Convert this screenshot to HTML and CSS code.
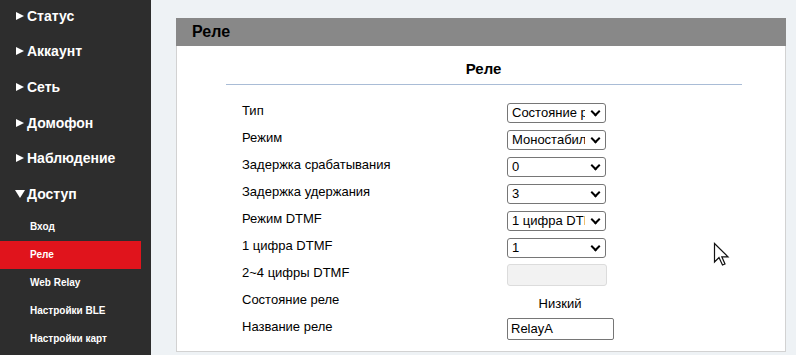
FILE: index.html
```html
<!DOCTYPE html>
<html>
  <head>
    <meta charset="utf-8">
    <title>Реле</title>
    <link rel="stylesheet" href="styles.css">
  </head>
  <body>
    <div class="sidebar">
      <div class="menu">
        <div class="menu-item"><span class="arrow"></span>Статус</div>
        <div class="menu-item"><span class="arrow"></span>Аккаунт</div>
        <div class="menu-item"><span class="arrow"></span>Сеть</div>
        <div class="menu-item"><span class="arrow"></span>Домофон</div>
        <div class="menu-item"><span class="arrow"></span>Наблюдение</div>
        <div class="menu-item"><span class="arrow open"></span>Доступ</div>
      </div>
      <div class="submenu">
        <div class="sub-item">Вход</div>
        <div class="sub-item active">Реле</div>
        <div class="sub-item">Web Relay</div>
        <div class="sub-item">Настройки BLE</div>
        <div class="sub-item">Настройки карт</div>
      </div>
    </div>

    <div class="main">
      <div class="panel">
        <div class="panel-head">Реле</div>
        <div class="panel-body">
          <div class="section-title">Реле</div>
          <div class="form">
            <div class="row">
              <div class="label">Тип</div>
              <div class="field"><span class="select-wrap"><select class="sel"><option>Состояние реле</option></select></span></div>
            </div>
            <div class="row">
              <div class="label">Режим</div>
              <div class="field"><span class="select-wrap"><select class="sel"><option>Моностабильный</option></select></span></div>
            </div>
            <div class="row">
              <div class="label">Задержка срабатывания</div>
              <div class="field"><span class="select-wrap"><select class="sel"><option>0</option></select></span></div>
            </div>
            <div class="row">
              <div class="label">Задержка удержания</div>
              <div class="field"><span class="select-wrap"><select class="sel"><option>3</option></select></span></div>
            </div>
            <div class="row">
              <div class="label">Режим DTMF</div>
              <div class="field"><span class="select-wrap"><select class="sel"><option>1 цифра DTMF</option></select></span></div>
            </div>
            <div class="row">
              <div class="label">1 цифра DTMF</div>
              <div class="field"><span class="select-wrap"><select class="sel"><option>1</option></select></span></div>
            </div>
            <div class="row">
              <div class="label">2~4 цифры DTMF</div>
              <div class="field"><input class="txt disabled" type="text" disabled></div>
            </div>
            <div class="row">
              <div class="label">Состояние реле</div>
              <div class="field"><span class="state">Низкий</span></div>
            </div>
            <div class="row">
              <div class="label">Название реле</div>
              <div class="field"><input class="txt name" type="text" value="RelayA"></div>
            </div>
          </div>
        </div>
      </div>
    </div>

    <svg class="cursor" width="18" height="26" viewBox="0 0 18 26">
      <path d="M1.5 1.5 L1.5 20 L6 15.5 L9.5 23 L12 22 L8.8 14.8 L15 14.8 Z" fill="#fff" stroke="#111" stroke-width="1.2" stroke-linejoin="miter"/>
    </svg>
  </body>
</html>
```

FILE: styles.css
```css
body {
  margin: 0;
  display: flex;
  height: 355px;
  overflow: hidden;
  background: #eef2f5;
  font-family: "Liberation Sans", Arial, sans-serif;
}

.sidebar {
  width: 151px;
  flex: none;
  background: #2d2d2d;
  color: #fff;
}

.menu {
  margin-top: -2px;
}

.menu-item {
  height: 35.6px;
  display: flex;
  align-items: center;
  padding-left: 16px;
  font-size: 14px;
  font-weight: bold;
}

/* треугольник меню */
.arrow {
  width: 0;
  height: 0;
  border-left: 8px solid #fff;
  border-top: 4px solid transparent;
  border-bottom: 4px solid transparent;
  margin-right: 3px;
}

.arrow.open {
  border-left: 5px solid transparent;
  border-right: 5px solid transparent;
  border-top: 8px solid #fff;
  border-bottom: none;
  margin-left: -1px;
  margin-right: 2px;
}

.submenu {
  margin-top: 1px;
}

.sub-item {
  width: 141px;
  height: 28px;
  box-sizing: border-box;
  display: flex;
  align-items: center;
  padding-left: 30px;
  font-size: 10px;
  font-weight: bold;
}

.sub-item.active {
  background: #e0141c;
}

.main {
  flex: 1;
}

.panel {
  margin: 18px 0 0 25px;
  width: 610px;
}

.panel-head {
  height: 28px;
  background: #888888;
  color: #000;
  font-size: 16px;
  font-weight: bold;
  line-height: 28px;
  padding-left: 16px;
}

.panel-body {
  background: #fff;
  border: 1px solid #d2d2d2;
  border-top: none;
  height: 305px;
}

.section-title {
  text-align: center;
  font-size: 15px;
  font-weight: bold;
  color: #000;
  margin-left: 5px;
  padding-top: 14px;
  height: 24px;
}

.form {
  margin-left: 49px;
  width: 516px;
  border-top: 1px solid #a9bcd6;
  padding-top: 13px;
}

.row {
  height: 27px;
  display: flex;
  align-items: center;
  padding-left: 16px;
  font-size: 13px;
  color: #000;
}

.label {
  width: 265px;
  margin-top: -3px;
}

.field {
  margin-top: 2px;
}

.select-wrap {
  position: relative;
  display: inline-block;
}

.select-wrap::after {
  content: "";
  position: absolute;
  right: 7px;
  top: 5px;
  width: 5px;
  height: 5px;
  border-right: 2px solid #000;
  border-bottom: 2px solid #000;
  transform: rotate(45deg);
  pointer-events: none;
}

.sel {
  appearance: none;
  -webkit-appearance: none;
  width: 99px;
  height: 20px;
  box-sizing: border-box;
  border: 1px solid #767676;
  border-radius: 3px;
  background: #fff;
  padding: 0 20px 0 4px;
  font-family: "Liberation Sans", Arial, sans-serif;
  font-size: 13px;
  color: #000;
  display: block;
}

.txt {
  box-sizing: border-box;
  font-family: "Liberation Sans", Arial, sans-serif;
  font-size: 13px;
  display: block;
}

.txt.disabled {
  width: 100px;
  height: 22px;
  background: #f2f2f2;
  border: 1px solid #dcdcdc;
  border-radius: 3px;
}

.txt.name {
  width: 107px;
  height: 22px;
  border: 1px solid #767676;
  border-radius: 2px;
  padding: 0 3px;
  color: #000;
}

.state {
  display: block;
  width: 106px;
  text-align: center;
  margin-top: 4px;
}

.cursor {
  position: absolute;
  left: 713px;
  top: 242px;
}
```
